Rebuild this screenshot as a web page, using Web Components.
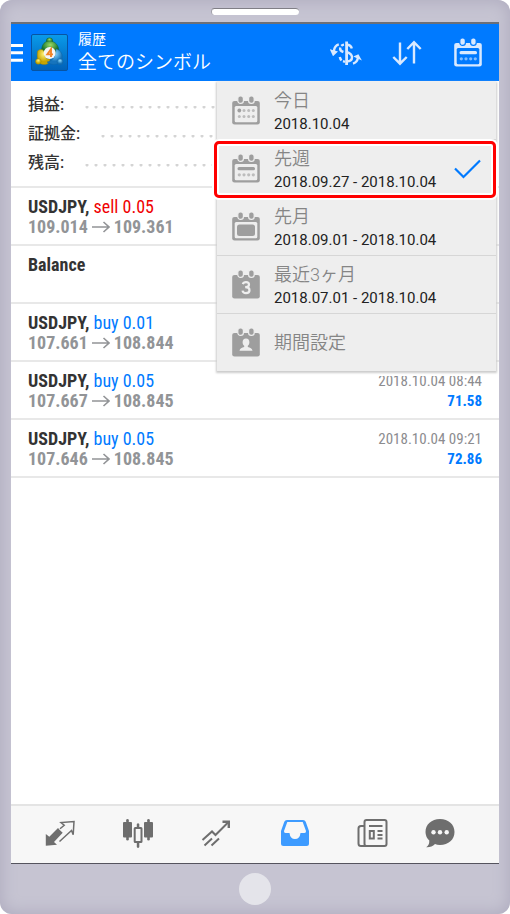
<!DOCTYPE html>
<html lang="ja">
<head>
<meta charset="utf-8">
<meta name="viewport" content="width=device-width, initial-scale=1">
<title>履歴</title>
<style>
  body { margin: 0; background: #fff; font-family: Roboto, "Noto Sans CJK JP", sans-serif; color: #333; }
</style>
</head>
<body>
<phone-frame>
  <app-header heading="履歴" subject="全てのシンボル"></app-header>
  <main-area>
    <summary-line label="損益:"></summary-line>
    <summary-line label="証拠金:"></summary-line>
    <summary-line label="残高:"></summary-line>
  </main-area>
  <deal-list>
    <deal-row symbol="USDJPY," side="sell" volume="0.05" open="109.014" close="109.361"></deal-row>
    <deal-row symbol="Balance"></deal-row>
    <deal-row symbol="USDJPY," side="buy" volume="0.01" open="107.661" close="108.844"></deal-row>
    <deal-row symbol="USDJPY," side="buy" volume="0.05" open="107.667" close="108.845" time="2018.10.04 08:44" profit="71.58"></deal-row>
    <deal-row symbol="USDJPY," side="buy" volume="0.05" open="107.646" close="108.845" time="2018.10.04 09:21" profit="72.86"></deal-row>
  </deal-list>
  <period-menu slot="overlay">
    <period-item icon="day" label="今日" range="2018.10.04"></period-item>
    <period-item icon="week" label="先週" range="2018.09.27 - 2018.10.04" selected></period-item>
    <period-item icon="month" label="先月" range="2018.09.01 - 2018.10.04"></period-item>
    <period-item icon="quarter" label="最近3ヶ月" range="2018.07.01 - 2018.10.04"></period-item>
    <period-item icon="custom" label="期間設定"></period-item>
  </period-menu>
  <tab-bar slot="tabs"></tab-bar>
</phone-frame>

<script>
const calendar = kind => {
  const inner = {
    day: '<g fill="#bcbcbc"><circle cx="12" cy="14.5" r="1.5"/><circle cx="16.7" cy="14.5" r="1.5"/><circle cx="21.3" cy="14.5" r="1.5"/><circle cx="7.3" cy="20.5" r="1.5"/><circle cx="12" cy="20.5" r="1.5"/><circle cx="16.7" cy="20.5" r="1.5"/><circle cx="21.3" cy="20.5" r="1.5"/></g><circle cx="7.3" cy="14.5" r="1.9"/>',
    week: '<rect x="5.5" y="13" width="17.5" height="3.2" rx="1.5"/><g opacity=".6"><circle cx="7.3" cy="20.8" r="1.6"/><circle cx="12" cy="20.8" r="1.6"/><circle cx="16.7" cy="20.8" r="1.6"/><circle cx="21.3" cy="20.8" r="1.6"/></g>',
    month: '<rect x="5" y="12.5" width="18" height="11.5" rx="2.5"/>'
  }[kind];
  const solid = {
    quarter: '<path d="M10.8 14.2Q11.5 12.2 14 12.2Q17 12.2 17 14.7Q17 17 13.2 17.2Q17.5 17.2 17.5 20.3Q17.5 23.2 14 23.2Q11 23.2 10.5 20.6" fill="none" stroke="var(--paper)" stroke-width="2.2"/>',
    custom: '<path d="M14 10.5C16.3 10.5 17.4 12 17.4 14.2C17.4 15.9 16.6 17 15.8 17.8V19C18 19.6 20.3 20.2 20.5 22.8H7.5C7.7 20.2 10 19.6 12.2 19V17.8C11.4 17 10.6 15.9 10.6 14.2C10.6 12 11.7 10.5 14 10.5Z" fill="var(--paper)"/>'
  }[kind];
  return `<svg width="28" height="29" viewBox="0 0 28 29" fill="currentColor" aria-hidden="true">
    <path d="M2.5 5H25.5Q27.8 5 27.8 7V26.3Q27.8 28.5 25.5 28.5H2.5Q.2 28.5 .2 26.3V7Q.2 5 2.5 5Z"/>
    <g stroke="var(--paper)" stroke-width="1.2"><rect x="5.8" y="-.2" width="5.6" height="7.6" rx="2.6"/><rect x="16.6" y="-.2" width="5.6" height="7.6" rx="2.6"/></g>
    ${inner ? `<rect x="2.7" y="10" width="22.6" height="16.2" rx="1.5" fill="var(--paper)"/>${inner}` : solid}
  </svg>`;
};

class Base extends HTMLElement {
  connectedCallback() {
    if (this.shadowRoot) return;
    this.attachShadow({ mode: 'open' }).innerHTML =
      `<style>*{box-sizing:border-box} svg{display:block} ${this.css}</style>${this.html}`;
  }
  attr(n) { return this.getAttribute(n) || ''; }
}

customElements.define('phone-frame', class extends Base {
  css = `
    :host { display: flex; flex-direction: column; box-sizing: border-box; min-height: 100vh; padding: 0 11px;
      background: #c6c4d2; border-radius: 12px;
      box-shadow: inset 0 0 16px 1px #aeabbe; }
    .top { height: 22px; padding-top: 8px; }
    .speaker { width: 88px; height: 7px; margin: 0 auto; border-radius: 4px; background: #fff;
      border-top: 1px solid #807f86; border-left: 1px solid #a09fa8; }
    .screen { position: relative; flex: 1; display: flex; flex-direction: column; background: #fff;
      border-top: 2px solid #55585f; border-top-color: #6b6f78; border-bottom: 1px solid #55545e; }
    .content { flex: 1; }
    .bottom { height: 50px; display: flex; justify-content: center; align-items: center; }
    .home { width: 32px; height: 32px; border: 0; padding: 0; border-radius: 50%; background: #e4e4ea; }`;
  html = `<div class="top"><div class="speaker"></div></div>
    <div class="screen"><div class="content"><slot></slot></div><slot name="overlay"></slot><slot name="tabs"></slot></div>
    <div class="bottom"><button class="home" aria-label="Home"></button></div>`;
});

customElements.define('app-header', class extends Base {
  css = `
    :host { display: flex; align-items: center; height: 57px; padding-right: 11px; background: #007aff; color: #fff; --paper: #007aff; }
    button { border: 0; padding: 0; background: none; color: #d9e9ff; width: 40px; height: 40px; display: grid; place-items: center; }
    .menu { width: 12px; color: #fff; margin-right: 8px; }
    .titles { flex: 1; margin-left: 10px; }
    h1, p { margin: 0; font-weight: 400; white-space: nowrap; }
    h1 { font-size: 14px; line-height: 20px; }
    p { font-size: 19px; line-height: 28px; font-weight: 350; }
    .actions { display: flex; gap: 21px; }`;
  get html() { return `
    <button class="menu" aria-label="Menu"><svg width="12" height="18" viewBox="0 0 12 18" fill="currentColor"><path d="M0 0H12V3H0ZM0 7.3H12V10.3H0ZM0 14.8H12V17.8H0Z"/></svg></button>
    <svg width="37" height="37" viewBox="0 0 37 37" aria-hidden="true">
      <defs>
        <linearGradient id="b" x2="0" y2="1"><stop stop-color="#0a9bea"/><stop offset="1" stop-color="#0060b8"/></linearGradient>
        <radialGradient id="g" cy=".3"><stop stop-color="#9bdc66"/><stop offset="1" stop-color="#16722d"/></radialGradient>
        <radialGradient id="y" cy=".3"><stop stop-color="#fff37a"/><stop offset="1" stop-color="#c7a400"/></radialGradient>
        <radialGradient id="c" cy=".3"><stop stop-color="#8fdcff"/><stop offset="1" stop-color="#1674bd"/></radialGradient>
      </defs>
      <rect x=".5" y=".5" width="36" height="36" rx="1.5" fill="url(#b)" stroke="#0754a3"/>
      <g fill="url(#g)" stroke="#105c2b" stroke-width=".4"><circle cx="18.5" cy="7" r="3.2"/><path d="M18.5 7C24 7 28 11 28 18L24 20C22 15 15 15 12 19L10.5 16C11 10 14 7 18.5 7Z"/></g>
      <g fill="url(#y)" stroke="#947b00" stroke-width=".4"><path d="M6.5 17C10 14 14 16 14 21C14 24 17 25 19 25C19 29 16 31 12 30.5C7 30 5.5 25 6.5 17Z"/><circle cx="7.3" cy="27.5" r="2.8"/></g>
      <g fill="url(#c)" stroke="#126099" stroke-width=".4"><path d="M25 15C30 16 32 21 31 25C29 31 21 32 16 28C22 27 25 22 25 15Z"/><circle cx="29" cy="27.7" r="3"/></g>
      <circle cx="18.7" cy="19" r="6" fill="#f4f5f6"/>
      <path d="M20 23V15.3L16.3 20.4H22" fill="none" stroke="#f08428" stroke-width="1.9"/>
    </svg>
    <div class="titles"><h1>${this.attr('heading')}</h1><p>${this.attr('subject')}</p></div>
    <div class="actions">
      <button aria-label="Currency"><svg width="32" height="26" viewBox="0 0 32 26" fill="none" stroke="currentColor" stroke-width="2.4">
        <path d="M16.6 1.5V25" stroke-width="2.8"/><path d="M21.8 8.6C21.3 6 19.3 4.7 16.7 4.7M16.7 11.8C20.3 13.2 22 14.6 22 17.3C22 20 20 21.5 16.7 21.5"/>
        <path d="M14 4.6C12.8 4.8 12 5.2 11.3 5.8M10.3 7.5C9.6 10 11 11.2 13.4 12M9.8 17C10.1 18.6 10.7 19.6 11.6 20.4M13 21.2L15 21.8"/>
        <path d="M8.8 4.3C5.6 5.2 4.2 8 3.9 11M23 23.6C26.3 22.6 27.8 20 28 17"/>
        <path d="M-.2 9.3L8 11.6L3 16.3ZM23.3 16.4L28.4 14.3L31.9 20.5Z" fill="currentColor" stroke="none"/></svg></button>
      <button aria-label="Sort"><svg width="30" height="26" viewBox="0 0 30 26" fill="none" stroke="currentColor" stroke-width="2.4">
        <path d="M8 2.5V23M1.3 17L8 23.7L14.7 17M22 23.5V2.5M15.3 9L22 2.2L28.7 9"/></svg></button>
      <button aria-label="Period">${calendar('week')}</button>
    </div>`; }
});

customElements.define('main-area', class extends Base {
  css = `:host { display: block; padding: 9px 17px; border-bottom: 2px solid #e8e8e8; }`;
  html = `<slot></slot>`;
});

customElements.define('summary-line', class extends Base {
  css = `
    :host { display: flex; align-items: center; height: 29px; gap: 18px; font: 500 16px/28px Roboto, "Noto Sans CJK JP", sans-serif; white-space: nowrap; }
    i { flex: 1; height: 3px; margin-top: 6px; background: radial-gradient(circle at 5px 1px, #d4d4d4 1px, transparent 2px) 0 0 / 9px 3px repeat-x; }`;
  get html() { return `<span>${this.attr('label')}</span><i></i>`; }
});

customElements.define('deal-list', class extends Base {
  css = `:host { display: block; font-family: "Roboto Condensed", "Liberation Sans Narrow", Roboto, sans-serif; }`;
  html = `<slot></slot>`;
});

customElements.define('deal-row', class extends Base {
  css = `
    :host { display: flex; justify-content: space-between; box-sizing: border-box; height: 58px; padding: 9px 17px 8px; border-bottom: 2px solid #e8e8e8;
      font-size: 18px; line-height: 20px; white-space: nowrap; }
    b { font-weight: 700; color: #333; }
    .buy { color: #007aff; } .sell { color: #f00000; }
    .price { display: flex; align-items: center; gap: 4px; font-weight: 700; color: #929497; }
    .right { text-align: right; font-size: 15px; color: #8c8c8f; }
    .profit { font-weight: 700; color: #007aff; }`;
  get html() {
    const a = n => this.attr(n);
    return `<div><div><b>${a('symbol')}</b>${a('side') ? ` <span class="${a('side')}">${a('side')} ${a('volume')}</span>` : ''}</div>
      ${a('open') ? `<div class="price"><span>${a('open')}</span><svg width="18" height="12" viewBox="0 0 18 12" fill="none" stroke="currentColor" stroke-width="1.6"><path d="M0 6H17M11.5 1L17 6L11.5 11"/></svg><span>${a('close')}</span></div>` : ''}</div>
      ${a('time') ? `<div class="right"><div>${a('time')}</div><div class="profit">${a('profit')}</div></div>` : ''}`;
  }
});

customElements.define('period-menu', class extends Base {
  css = `:host { position: absolute; top: 58px; right: 3px; width: 279px; background: #eee; box-shadow: 0 1px 2px 1px #ccc, 0 5px 0 #fff; --paper: #eee; }`;
  html = `<slot></slot>`;
});

customElements.define('period-item', class extends Base {
  css = `
    :host { display: block; position: relative; border-bottom: 1px solid #d6d6d6; }
    :host(:last-child) { border-bottom: 0; }
    :host([selected]) { z-index: 1; }
    :host([selected])::after { content: ""; position: absolute; inset: 1px 0 -1px -3px; border: 3px solid #f00; border-radius: 5px;
      box-shadow: 0 0 0 2px #fff, inset 0 0 0 2px #fff; pointer-events: none; }
    button { display: flex; align-items: center; width: 100%; height: 57px; padding: 0 15px 0 15px; gap: 14px; border: 0; background: none; text-align: left; color: #9e9e9e; font-family: inherit; }
    .text { flex: 1; white-space: nowrap; }
    .label { display: block; font-size: 18px; line-height: 24px; font-weight: 350; color: #858585; }
    .label:not(:last-child) { padding-top: 3px; }
    .range { display: block; font-size: 15px; line-height: 22px; color: #222; }`;
  get html() { return `<button>${calendar(this.attr('icon'))}
    <span class="text"><span class="label">${this.attr('label')}</span>${this.attr('range') ? `<span class="range">${this.attr('range')}</span>` : ''}</span>
    ${this.hasAttribute('selected') ? '<svg width="27" height="20" viewBox="0 0 27 20" fill="none" stroke="#007aff" stroke-width="2.2"><path d="M1 9.5L9.5 18L26 1.5"/></svg>' : ''}</button>`; }
});

customElements.define('tab-bar', class extends Base {
  css = `
    :host { display: flex; box-sizing: border-box; height: 59px; padding: 0 31px 4px 10px; background: #f7f7f7; border-top: 2px solid #e4e4e4; color: #6e6e6e; }
    button { flex: 78 1 0; min-width: 0; padding: 0; border: 0; background: none; color: inherit; display: grid; place-items: center; }
    button:last-child { flex-grow: 56; }
    .on { color: #3d9bff; }`;
  html = `
    <button aria-label="Quotes"><svg width="30" height="30" viewBox="0 0 30 30">
      <path d="M.8 16L4.3 18.7L13 10L15 12.2L17.7 14.7L9 24L12 26.7L.8 27.8Z" fill="currentColor"/>
      <path d="M14.5 23.5L26.5 12.5L28.2 16.7L29 3.5L16 4.6L19.2 7.2L15 10.8" fill="none" stroke="currentColor" stroke-width="1.5"/></svg></button>
    <button aria-label="Chart"><svg width="32" height="30" viewBox="0 0 32 30" fill="currentColor">
      <rect x="1" y="4" width="9" height="15.5" rx="1"/><rect x="4.2" y="1" width="2.6" height="21.5" rx="1.3"/>
      <rect x="22" y="4" width="9" height="15.5" rx="1"/><rect x="25.2" y="1" width="2.6" height="21.5" rx="1.3"/>
      <rect x="12.7" y="10" width="6.8" height="14" rx=".5" fill="none" stroke="currentColor" stroke-width="2"/><path d="M14.8 9V6Q16 4.3 17.3 6V9ZM14.8 25V29Q16 31 17.3 29V25Z"/></svg></button>
    <button aria-label="Trade"><svg width="30" height="28" viewBox="0 0 30 28" fill="none" stroke="currentColor" stroke-width="2">
      <path d="M1.5 21L11 12.5L14.5 16L27 3.5M3.5 26.5L11 19.5M10.5 26.5L18 19.5"/><path d="M21.5 2.7H27.8V9" stroke-width="2.4"/></svg></button>
    <button class="on" aria-label="History" aria-current="page"><svg width="30" height="28" viewBox="0 0 30 28">
      <path fill="currentColor" fill-rule="evenodd" d="M7 1H23Q25 1 25.7 2.8L29 12V24.5Q29 27 26.5 27H3.5Q1 27 1 24.5V12L4.3 2.8Q5 1 7 1ZM7.3 3L4 12Q3.8 14 5.5 14H9.5Q10.2 20 15 20Q19.8 20 20.5 14H24.5Q26.2 14 26 12L22.7 3Z"/></svg></button>
    <button aria-label="News"><svg width="31" height="30" viewBox="0 0 31 30" fill="none" stroke="currentColor" stroke-width="2">
      <rect x="7.5" y="2" width="22" height="26" rx="2"/><path d="M7.5 8H4Q1.5 8 1.5 10.5V25.5Q1.5 28 4 28H10"/>
      <path d="M12 8H25.5M20.5 13H25.5M20.5 17H25.5M20.5 20.5H25.5"/><rect x="12.8" y="13" width="4" height="7.5"/></svg></button>
    <button aria-label="Messages"><svg width="30" height="30" viewBox="0 0 30 30">
      <path fill="currentColor" d="M15 1C23.5 1 29.5 6.5 29.5 14C29.5 21.5 23.5 27 15 27Q12 27 10 26Q6.5 29.5 1.2 29.2Q4.5 27 4.3 22.5Q.5 19 .5 14C.5 6.5 6.5 1 15 1Z"/>
      <g fill="#f7f7f7"><circle cx="8.5" cy="14.3" r="2.2"/><circle cx="15" cy="14.3" r="2.2"/><circle cx="21.7" cy="14.3" r="2.2"/></g></svg></button>`;
});
</script>
</body>
</html>
